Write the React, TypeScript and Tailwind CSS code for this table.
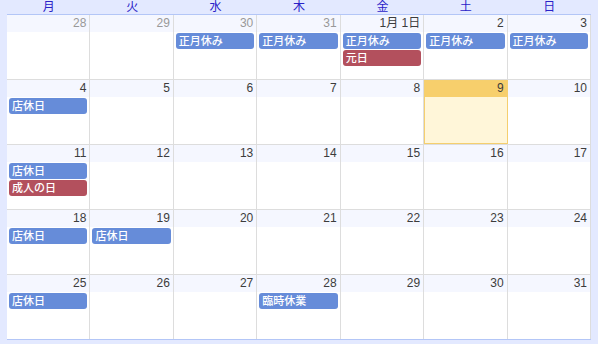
type Ev = { t: string; c: "blue" | "red" };
type Day = { n: string; other?: boolean; today?: boolean; ev?: Ev[] };

const off: Ev[] = [{ t: "正月休み", c: "blue" }];
const shop: Ev[] = [{ t: "店休日", c: "blue" }];

const weeks: Day[][] = [
  [
    { n: "28", other: true },
    { n: "29", other: true },
    { n: "30", other: true, ev: off },
    { n: "31", other: true, ev: off },
    { n: "1月 1日", ev: [...off, { t: "元日", c: "red" }] },
    { n: "2", ev: off },
    { n: "3", ev: off },
  ],
  [
    { n: "4", ev: shop },
    { n: "5" },
    { n: "6" },
    { n: "7" },
    { n: "8" },
    { n: "9", today: true },
    { n: "10" },
  ],
  [
    { n: "11", ev: [...shop, { t: "成人の日", c: "red" }] },
    { n: "12" },
    { n: "13" },
    { n: "14" },
    { n: "15" },
    { n: "16" },
    { n: "17" },
  ],
  [
    { n: "18", ev: shop },
    { n: "19", ev: shop },
    { n: "20" },
    { n: "21" },
    { n: "22" },
    { n: "23" },
    { n: "24" },
  ],
  [
    { n: "25", ev: shop },
    { n: "26" },
    { n: "27" },
    { n: "28", ev: [{ t: "臨時休業", c: "blue" }] },
    { n: "29" },
    { n: "30" },
    { n: "31" },
  ],
];

const names = ["月", "火", "水", "木", "金", "土", "日"];

export default function App() {
  return (
    <div
      className="w-[598px] h-[344px] bg-[#e3e9ff] px-[7px] overflow-hidden"
      style={{ fontFamily: '"Liberation Sans", "Noto Sans CJK JP", sans-serif' }}
    >
      <div className="grid grid-cols-7 h-[15px] border-b border-[#b3c6f7]">
        {names.map((d) => (
          <div key={d} className="text-center text-[12px] leading-[15px] text-[#2a22c8]">
            {d}
          </div>
        ))}
      </div>
      {weeks.map((w, i) => (
        <div
          key={i}
          className={`grid grid-cols-7 h-[65px] border-b ${
            i === 4 ? "border-[#b3c6f7]" : "border-[#dddddd]"
          } bg-white`}
        >
          {w.map((d, j) => (
            <Cell key={j} d={d} />
          ))}
        </div>
      ))}
    </div>
  );
}

function Cell({ d }: { d: Day }) {
  return (
    <div
      className={`flex flex-col border-r border-[#dddddd] ${
        d.today ? "bg-[#fff6d9] outline outline-1 outline-[#f5cf6e] -outline-offset-1" : ""
      }`}
    >
      <div
        className={`h-[17px] pr-[3px] text-right text-[12px] leading-[17px] ${
          d.today ? "bg-[#f7cf6c]" : "bg-[#f5f7ff]"
        } ${d.other ? "text-[#999999]" : "text-[#3c3c3c]"}`}
      >
        {d.n}
      </div>
      <div className="flex flex-col gap-[1px] px-[2px] pt-[1px]">
        {d.ev?.map((e, k) => (
          <div
            key={k}
            className={`h-[16px] rounded-[3px] pl-[3px] text-[11px] font-medium leading-[16px] text-white whitespace-nowrap overflow-hidden ${
              e.c === "blue" ? "bg-[#668cd9]" : "bg-[#b3505d]"
            }`}
          >
            {e.t}
          </div>
        ))}
      </div>
    </div>
  );
}
